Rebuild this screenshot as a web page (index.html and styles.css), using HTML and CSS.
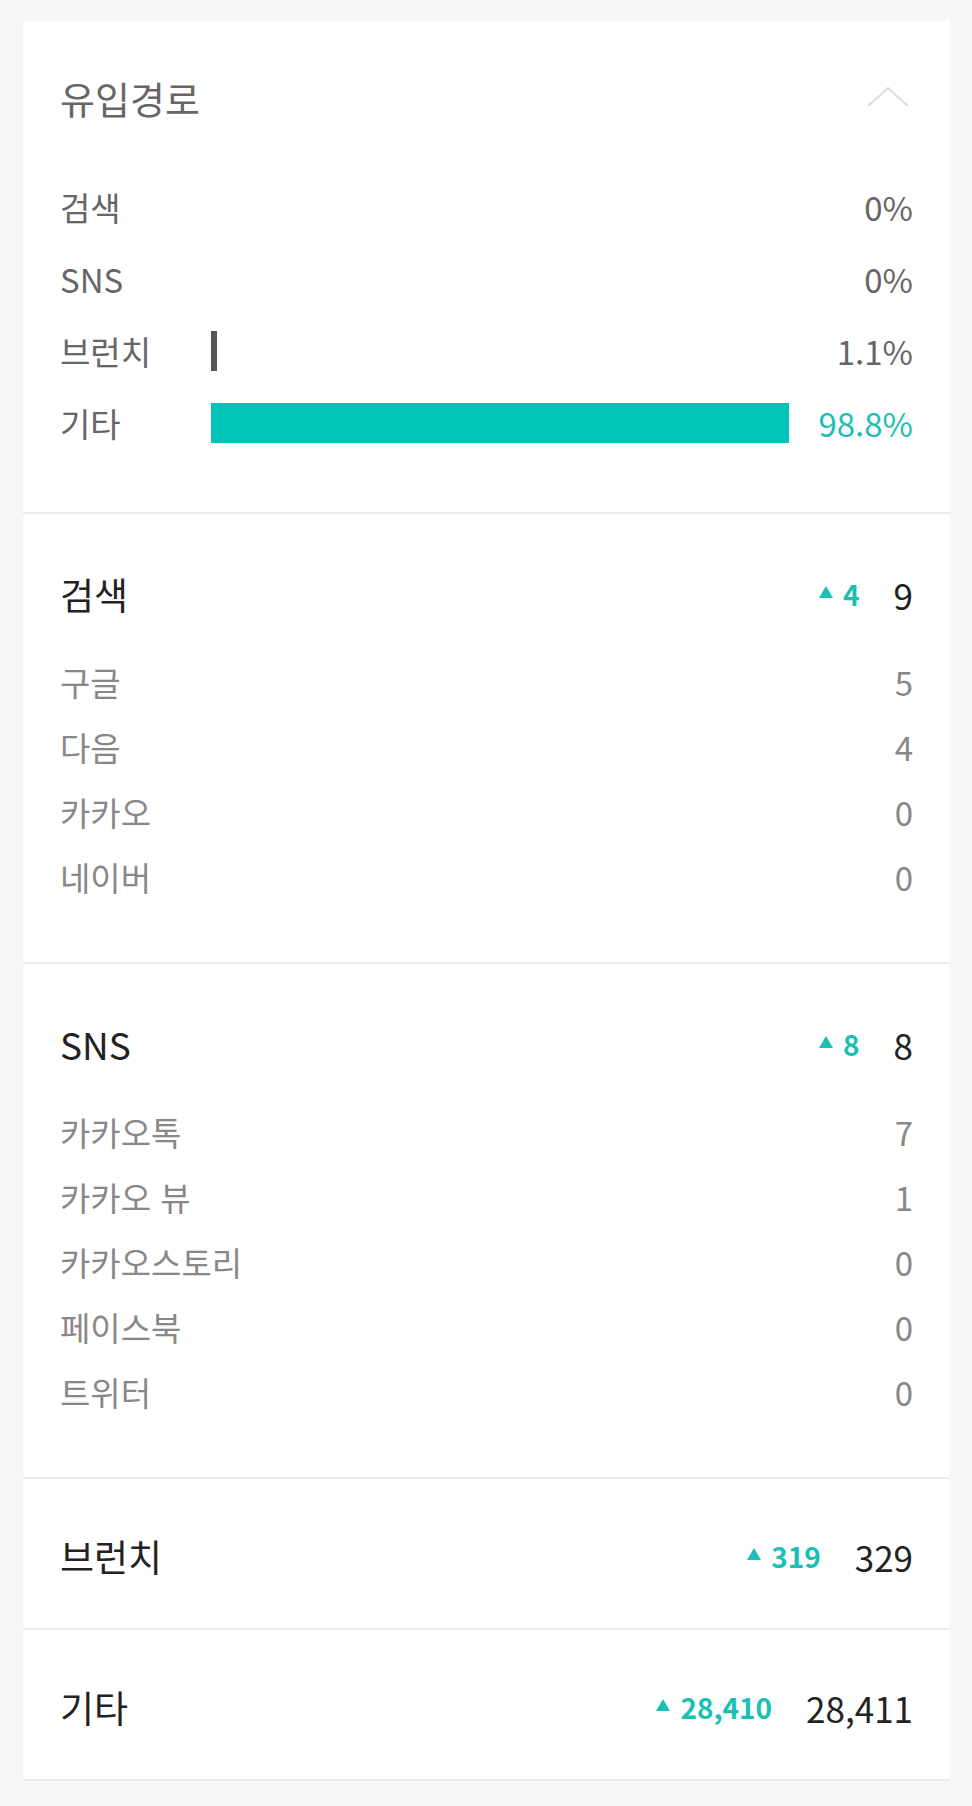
FILE: index.html
```html
<!DOCTYPE html>
<html lang="ko">
<head>
  <meta charset="UTF-8" />
  <meta name="viewport" content="width=device-width, initial-scale=1.0" />
  <title>유입경로</title>
  <link rel="stylesheet" href="styles.css">
</head>
<body>

  <div class="page">

    <!-- 유입경로 summary -->
    <div class="section summary">
      <div class="summary-header">
        <div class="summary-title">유입경로</div>
        <svg class="chevron" width="44" height="22" viewBox="0 0 44 22">
          <polyline points="2,20 22,2 42,20" fill="none" stroke="#dcdcdc" stroke-width="2" />
        </svg>
      </div>

      <div class="ratio-row">
        <div class="ratio-label">검색</div>
        <div class="ratio-track"></div>
        <div class="ratio-value">0%</div>
      </div>
      <div class="ratio-row">
        <div class="ratio-label">SNS</div>
        <div class="ratio-track"></div>
        <div class="ratio-value">0%</div>
      </div>
      <div class="ratio-row">
        <div class="ratio-label">브런치</div>
        <div class="ratio-track"><div class="ratio-bar gray" style="width: 1.1%"></div></div>
        <div class="ratio-value">1.1%</div>
      </div>
      <div class="ratio-row">
        <div class="ratio-label">기타</div>
        <div class="ratio-track"><div class="ratio-bar teal" style="width: 98.8%"></div></div>
        <div class="ratio-value teal-text">98.8%</div>
      </div>
    </div>

    <!-- 검색 -->
    <div class="section detail">
      <div class="group-header">
        <div class="group-title">검색</div>
        <div class="group-numbers">
          <span class="delta"><span class="arrow"></span>4</span>
          <span class="total">9</span>
        </div>
      </div>
      <div class="sub-row"><span>구글</span><span>5</span></div>
      <div class="sub-row"><span>다음</span><span>4</span></div>
      <div class="sub-row"><span>카카오</span><span>0</span></div>
      <div class="sub-row"><span>네이버</span><span>0</span></div>
    </div>

    <!-- SNS -->
    <div class="section detail">
      <div class="group-header">
        <div class="group-title">SNS</div>
        <div class="group-numbers">
          <span class="delta"><span class="arrow"></span>8</span>
          <span class="total">8</span>
        </div>
      </div>
      <div class="sub-row"><span>카카오톡</span><span>7</span></div>
      <div class="sub-row"><span>카카오 뷰</span><span>1</span></div>
      <div class="sub-row"><span>카카오스토리</span><span>0</span></div>
      <div class="sub-row"><span>페이스북</span><span>0</span></div>
      <div class="sub-row"><span>트위터</span><span>0</span></div>
    </div>

    <!-- 브런치 -->
    <div class="section simple">
      <div class="group-header">
        <div class="group-title">브런치</div>
        <div class="group-numbers">
          <span class="delta"><span class="arrow"></span>319</span>
          <span class="total">329</span>
        </div>
      </div>
    </div>

    <!-- 기타 -->
    <div class="section simple">
      <div class="group-header">
        <div class="group-title">기타</div>
        <div class="group-numbers">
          <span class="delta"><span class="arrow"></span>28,410</span>
          <span class="total">28,411</span>
        </div>
      </div>
    </div>

  </div>

</body>
</html>
```

FILE: styles.css
```css
body {
  font-family: "Noto Sans CJK KR", "Noto Sans", sans-serif;
  background-color: #f7f7f7;
  margin: 0;
  padding: 21px 22px 21px 23px;
}

.section {
  background-color: #fff;
  border-bottom: 2px solid #ececec;
  padding: 0 37px;
}

/* Summary block with ratio bars */
.summary {
  padding-top: 38px;
  padding-bottom: 53px;
}

.summary-header {
  display: flex;
  justify-content: space-between;
  align-items: center;
  height: 76px;
  margin-bottom: 36px;
}

.summary-title {
  font-size: 38px;
  color: #666;
}

.chevron {
  margin-right: 3px;
}

.ratio-row {
  display: grid;
  grid-template-columns: 151px 1fr 117px;
  align-items: center;
  height: 72px;
  font-size: 33px;
  color: #666;
}

.ratio-track {
  height: 40px;
}

.ratio-bar {
  height: 100%;
}

.ratio-bar.gray {
  background-color: #555;
  min-width: 6px;
}

.ratio-bar.teal {
  background-color: #00c4b8;
}

.ratio-value {
  text-align: right;
}

.teal-text {
  color: #1cbfb4;
}

/* Group blocks */
.detail {
  padding-top: 50px;
  padding-bottom: 53px;
}

.simple {
  padding-top: 47px;
  padding-bottom: 42px;
}

.group-header {
  display: flex;
  justify-content: space-between;
  align-items: center;
  height: 60px;
}

.detail .group-header {
  margin-bottom: 25px;
}

.group-title {
  font-size: 37px;
  color: #222;
}

.group-numbers {
  display: flex;
  align-items: center;
}

.delta {
  display: flex;
  align-items: center;
  font-size: 28px;
  font-weight: 700;
  color: #1cbfb4;
  margin-right: 34px;
}

.arrow {
  width: 0;
  height: 0;
  border-left: 7px solid transparent;
  border-right: 7px solid transparent;
  border-bottom: 12px solid #1cbfb4;
  margin-right: 10px;
  margin-bottom: 5px;
}

.total {
  font-size: 35px;
  color: #222;
}

.sub-row {
  display: flex;
  justify-content: space-between;
  align-items: center;
  height: 65px;
  font-size: 33px;
  color: #888;
}
```
